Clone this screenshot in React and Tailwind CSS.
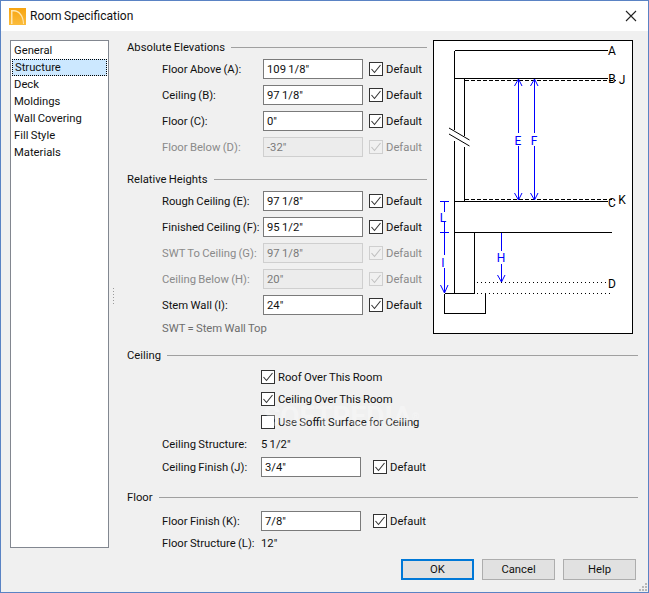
function Check({ checked = true, disabled = false }) {
  return (
    <span className={`flex h-[14px] w-[14px] shrink-0 items-center justify-center border ${disabled ? "border-[#cfcfcf] bg-[#f0f0f0]" : "border-[#333333] bg-white"}`}>
      {checked && (
        <svg width="12" height="12" viewBox="0 0 12 12" fill="none">
          <path d="M1.5 6 L4.5 9.5 L10.5 2" stroke={disabled ? "#c0c0c0" : "#333333"} strokeWidth="1.1" />
        </svg>
      )}
    </span>
  );
}

function Field({ label, value, disabled = false }) {
  return (
    <div className="flex h-[26px] items-center pl-[35px]">
      <span className={`w-[101px] whitespace-nowrap pt-[2px] ${disabled ? "text-[#8a8a8a]" : ""}`}>{label}</span>
      <span className={`flex h-[20px] w-[100px] items-center border pl-[3px] pt-[2px] ${disabled ? "border-[#cfcfcf] bg-[#ececec] text-[#7a7a7a]" : "border-[#7a7a7a] bg-white"}`}>{value}</span>
      <span className="ml-[6px] flex items-center gap-[3px]">
        <Check disabled={disabled} />
        <span className={`pt-[1px] ${disabled ? "text-[#8a8a8a]" : ""}`}>Default</span>
      </span>
    </div>
  );
}

function Header({ title }) {
  return (
    <div className="flex h-[14px] items-center gap-[6px]">
      <span className="whitespace-nowrap pt-[2px]">{title}</span>
      <span className="h-px flex-1 bg-[#a0a0a0]"></span>
    </div>
  );
}

function CheckRow({ label, checked = true, className = "" }) {
  return (
    <div className={`flex h-[16px] items-center gap-[3px] pl-[134px] ${className}`}>
      <Check checked={checked} />
      <span className="pt-[2px]">{label}</span>
    </div>
  );
}

function FinishRow({ label, value }) {
  return (
    <div className="flex h-[20px] items-center pl-[35px]">
      <span className="w-[99px] whitespace-nowrap pt-[2px]">{label}</span>
      <span className="flex h-[20px] w-[100px] items-center border border-[#7a7a7a] bg-white pl-[3px] pt-[2px]">{value}</span>
      <span className="ml-[12px] flex items-center gap-[3px]">
        <Check />
        <span className="pt-[1px]">Default</span>
      </span>
    </div>
  );
}

function Diagram() {
  const ink = "#000000";
  const blue = "#0000ff";
  const labelProps = { fontFamily: "Roboto, sans-serif", fontSize: 12, textAnchor: "middle" };
  return (
    <svg width="200" height="294" viewBox="433 40 200 294" className="shrink-0 bg-white" shapeRendering="crispEdges">
      <rect x="433.5" y="40.5" width="199" height="293" fill="#fff" stroke={ink} />
      <g stroke={ink} fill="none">
        <path d="M454.5 50.5H608M454.5 50.5V130M454.5 141V293.5M454.5 78.5H608M464.5 78.5V136M464.5 147V201" />
        <path d="M454.5 201.5H608M454.5 232.5H612M474.5 232.5V293.5M444.5 293.5H474.5M444.5 293.5V313.5H485.5V293.5" />
        <path d="M465 80.5H616" strokeDasharray="4 2" />
        <path d="M465 199.5H612" strokeDasharray="4 2" />
        <path d="M477 282.5H608M477 293.5H610" strokeDasharray="1 3" />
      </g>
      <g stroke={ink} fill="none" shapeRendering="auto">
        <path d="M449 128L469.5 140M449 134L469.5 146" />
      </g>
      <g stroke={blue} fill="none">
        <path d="M518.5 80V133M518.5 146V200M534.5 80V133M534.5 146V200" />
        <path d="M444.5 201V212M444.5 222V255M444.5 268V293M440 201.5H449M440 232.5H449" />
        <path d="M501.5 233V251M501.5 264V282" />
      </g>
      <g stroke={blue} fill="none" shapeRendering="auto">
        <path d="M514.5 86L518.5 79L522 86M530.5 86L534.5 79L538 86" />
        <path d="M514.5 193L518.5 200L522 193M530.5 193L534.5 200L538 193" />
        <path d="M440.5 285L444.5 293L448 285M497.5 275L501.5 282L505 275" />
      </g>
      <g {...labelProps} fill={ink}>
        <text x="612" y="55">A</text>
        <text x="612" y="83">B</text>
        <text x="622" y="84">J</text>
        <text x="612" y="207">C</text>
        <text x="622" y="204">K</text>
        <text x="612" y="288">D</text>
      </g>
      <g {...labelProps} fill={blue}>
        <text x="518" y="145">E</text>
        <text x="534" y="145">F</text>
        <text x="443" y="222">L</text>
        <text x="443" y="267">I</text>
        <text x="501" y="262">H</text>
      </g>
    </svg>
  );
}

export default function App() {
  const items = ["General", "Structure", "Deck", "Moldings", "Wall Covering", "Fill Style", "Materials"];
  return (
    <div
      className="relative flex h-[593px] w-[649px] flex-col overflow-hidden border border-[#5a83c4] bg-[#f0f0f0] text-[11.25px] leading-[16px] text-[#111111] [word-spacing:-0.5px]"
      style={{ fontFamily: "Roboto, 'Open Sans', sans-serif" }}
    >
      <div className="flex h-[30px] shrink-0 items-center bg-white pl-[8px] pr-[10px]">
        <svg width="17" height="17" viewBox="0 0 17 17" className="shrink-0">
          <defs>
            <linearGradient id="g" x1="0" y1="0" x2="0" y2="1">
              <stop offset="0" stopColor="#f7a410" />
              <stop offset="1" stopColor="#fbbc3c" />
            </linearGradient>
          </defs>
          <rect width="17" height="17" fill="url(#g)" />
          <path d="M2 16V2H5C10 2 15 7 15 16H14C14 8 9 3.5 5 3.5H3.5V16Z" fill="#ffe6b0" />
        </svg>
        <span className="ml-[4px] text-[12px]">Room Specification</span>
        <svg width="12" height="12" viewBox="0 0 12 12" className="ml-auto mr-[1px]">
          <path d="M1 1L11 11M11 1L1 11" stroke="#222" strokeWidth="1.1" fill="none" />
        </svg>
      </div>

      <div className="flex min-h-0 flex-1 pt-[9px] pl-[9px] pr-[10px]">
        <div className="h-[508px] w-[99px] shrink-0 border border-[#828790] bg-white p-px">
          {items.map((t) => (
            <div
              key={t}
              className={`h-[17px] whitespace-nowrap pl-[2px] ${t === "Structure" ? "border border-dotted border-black bg-[#cce8ff] pl-[1px] leading-[16px]" : "leading-[18px]"}`}
            >
              {t}
            </div>
          ))}
        </div>

        <div className="relative w-[18px] shrink-0">
          <div className="absolute left-[4px] top-[248px] flex flex-col gap-[2px]">
            {[0, 1, 2, 3, 4, 5].map((i) => (
              <span key={i} className="h-px w-px bg-[#9a9a9a]"></span>
            ))}
          </div>
        </div>

        <div className="flex min-w-0 flex-1 flex-col">
          <div className="flex">
            <div className="w-[300px] shrink-0">
              <Header title="Absolute Elevations" />
              <div className="mt-[2px]">
                <Field label="Floor Above (A):" value={'109 1/8"'} />
                <Field label="Ceiling (B):" value={'97 1/8"'} />
                <Field label="Floor (C):" value={'0"'} />
                <Field label="Floor Below (D):" value={'-32"'} disabled />
              </div>
              <div className="mt-[12px]">
                <Header title="Relative Heights" />
              </div>
              <div className="mt-[2px]">
                <Field label="Rough Ceiling (E):" value={'97 1/8"'} />
                <Field label="Finished Ceiling (F):" value={'95 1/2"'} />
                <Field label="SWT To Ceiling (G):" value={'97 1/8"'} disabled />
                <Field label="Ceiling Below (H):" value={'20"'} disabled />
                <Field label="Stem Wall (I):" value={'24"'} />
              </div>
              <div className="mt-[1px] pl-[35px] pt-[2px] text-[#6d6d6d]">SWT = Stem Wall Top</div>
            </div>
            <div className="ml-[6px]">
              <Diagram />
            </div>
          </div>

          <div className="mt-[11px]">
            <Header title="Ceiling" />
          </div>
          <CheckRow label="Roof Over This Room" className="mt-[7px]" />
          <CheckRow label="Ceiling Over This Room" className="mt-[6px]" />
          <CheckRow label="Use Soffit Surface for Ceiling" checked={false} className="mt-[7px]" />
          <div className="mt-[6px] flex h-[16px] items-center pl-[35px]">
            <span className="w-[99px] whitespace-nowrap pt-[1px]">Ceiling Structure:</span>
            <span className="pt-[1px]">5 1/2"</span>
          </div>
          <div className="mt-[5px]">
            <FinishRow label="Ceiling Finish (J):" value={'3/4"'} />
          </div>
          <div className="mt-[13px]">
            <Header title="Floor" />
          </div>
          <div className="mt-[7px]">
            <FinishRow label="Floor Finish (K):" value={'7/8"'} />
          </div>
          <div className="mt-[4px] flex h-[16px] items-center pl-[35px]">
            <span className="w-[99px] whitespace-nowrap pt-[1px]">Floor Structure (L):</span>
            <span className="pt-[1px]">12"</span>
          </div>

          <div className="mt-[8px] flex justify-end gap-[8px] pr-[2px]">
            <button className="h-[21px] w-[73px] border-2 border-[#0078d7] bg-[#e1e1e1] pt-[1px]">OK</button>
            <button className="h-[21px] w-[73px] border border-[#adadad] bg-[#e1e1e1] pt-[1px]">Cancel</button>
            <button className="h-[21px] w-[73px] border border-[#adadad] bg-[#e1e1e1] pt-[1px]">Help</button>
          </div>
        </div>
      </div>

      <div className="pointer-events-none absolute left-[262px] top-[398px] select-none whitespace-nowrap text-[28px] font-bold leading-[36px] text-white opacity-30">
        SOFTPEDIA<span className="align-top text-[10px]">®</span>
      </div>

      <svg width="10" height="10" viewBox="0 0 10 10" className="absolute bottom-0 right-0">
        <g fill="#b8b8b8">
          <rect x="7" y="1" width="2" height="2" />
          <rect x="4" y="4" width="2" height="2" />
          <rect x="7" y="4" width="2" height="2" />
          <rect x="1" y="7" width="2" height="2" />
          <rect x="4" y="7" width="2" height="2" />
          <rect x="7" y="7" width="2" height="2" />
        </g>
      </svg>
    </div>
  );
}
